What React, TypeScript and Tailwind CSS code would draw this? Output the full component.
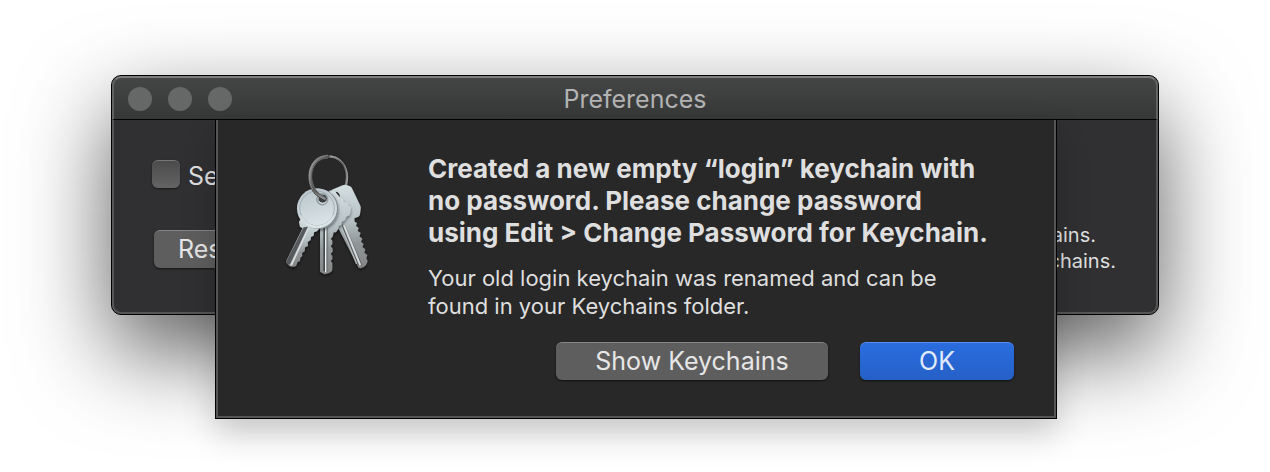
import type { ButtonHTMLAttributes } from "react"
import clsx from "clsx"

function KeysIcon() {
  return (
    <svg viewBox="0 0 360 420" className="h-[140px] w-[120px] shrink-0" aria-hidden="true">
      <defs>
        <linearGradient id="steel" x1="0" y1="0" x2="0" y2="1">
          <stop offset="0" stopColor="#d5dfe2" />
          <stop offset="0.45" stopColor="#b3bec2" />
          <stop offset="0.7" stopColor="#909698" />
          <stop offset="1" stopColor="#858585" />
        </linearGradient>
        <linearGradient id="disc" x1="0" y1="0" x2="0.3" y2="1">
          <stop offset="0" stopColor="#b6c3c9" />
          <stop offset="1" stopColor="#dae3e6" />
        </linearGradient>
        <linearGradient id="ring" x1="0" y1="0" x2="1" y2="1">
          <stop offset="0" stopColor="#a5a5a5" />
          <stop offset="0.5" stopColor="#555" />
          <stop offset="1" stopColor="#999" />
        </linearGradient>
        <filter id="drop" x="-20%" y="-20%" width="140%" height="150%">
          <feDropShadow dx="0" dy="5" stdDeviation="4" floodOpacity="0.55" />
        </filter>
      </defs>

      {/* back half of the ring */}
      <path d="M174 34c34 0 57 26 57 62 0 16-4 30-10 42" fill="none" stroke="#222" strokeWidth="12" />
      <path d="M174 34c34 0 57 26 57 62 0 16-4 30-10 42" fill="none" stroke="url(#ring)" strokeWidth="7" />
      <path d="M174 32c36 0 58 28 58 64 0 14-3 28-8 38" fill="none" stroke="#bbb" strokeWidth="1.5" />

      {/* right key */}
      <g filter="url(#drop)">
        <path
          d="M184 135 218 121q7-3 14 0l8 3q5 2 7 8l24 50q2 5 1 10l-2 16q-1 5-5 7l-12 5 1 10 7 4-3 9 8 6-3 9 9 6-4 10 9 7-4 9 8 7-4 9 9 7-3 10 9 7-3 10 4 8q-4 18-22 22-6 0-8-7l-55-108-18-17z"
          fill="url(#steel)"
        />
        <path d="m213 240 11-2 53 122-8 3-8-5z" fill="#555b5d" />
        <path d="m218 240 6-2 50 122-6 2z" fill="#d4dadb" />
        <path d="m212 240 48 116" stroke="#b5babb" strokeWidth="4" />
        <path d="M197 140q12 1 13 17l-9-4z" fill="#202324" />
      </g>

      {/* middle key */}
      <g filter="url(#drop)">
        <path
          d="m179 136 17 5 14 16 9 5 2 9 12 3 2 8 8 4-2 15-2 9-10 5-4 11-9 4-3 10-7 3-2 10-6 9h-7l-3 13-6 6 5 6v11l-5 5 6 8v9l-6 6 5 7v10l-5 4 5 8v13l-1 10q-9 9-22 10l-14-8V240z"
          fill="url(#steel)"
        />
        <path d="M160 250h9v132l-9-5z" fill="#454a4c" />
        <path d="M165 250h4v132h-4z" fill="#eef1f1" />
        <path d="M173 250v131" stroke="#727779" strokeWidth="3" />
      </g>

      {/* left key */}
      <g filter="url(#drop)">
        <path
          d="m94 220-7 11 3 14 8 5-47 93q-4 7-1 11l8 9q11 5 20 0l5-12 7-3 1-10 6-5-1-9 8-5 1-12 9-4-1-12 9-6 1-9 8-4 1-10 9-3 11-13z"
          fill="url(#steel)"
        />
        <path d="m101 247 13-2-53 110q-3 6-10 1l-2-6z" fill="#55595b" />
        <path d="m113 249 5-1-52 114-6-1z" fill="#d8dcdc" />
        <circle cx="145" cy="191" r="60" fill="#858f93" />
        <circle cx="141" cy="190" r="60" fill="url(#disc)" />
        <circle cx="141" cy="190" r="52" fill="none" stroke="#99a6ab" strokeWidth="2.5" />
        <path d="M93 211a52 52 0 0 0 96 0" fill="none" stroke="#eff4f5" strokeWidth="2" />
        <circle cx="157" cy="163" r="17" fill="#aab4b7" stroke="#737d80" strokeWidth="2" />
        <circle cx="158" cy="161" r="12" fill="#383e40" />
        <path d="M147 169q11 12 22 0" fill="none" stroke="#e8eded" strokeWidth="3" />
      </g>

      {/* front half of the ring */}
      <path d="M174 34c-32 0-54 25-54 60 0 32 17 55 44 67" fill="none" stroke="#3c3c3c" strokeWidth="11" strokeLinecap="round" />
      <path d="M174 34c-32 0-54 25-54 60 0 32 17 55 44 67" fill="none" stroke="url(#ring)" strokeWidth="7" strokeLinecap="round" />
      <path d="M174 31c-34 0-57 27-57 63 0 32 17 55 43 66" fill="none" stroke="#aaa" strokeWidth="1.5" />
      <path d="M174 39c-29 0-49 23-49 55 0 28 14 48 38 61" fill="none" stroke="#999" strokeWidth="1.5" />
    </svg>
  )
}

interface PushButtonProps extends ButtonHTMLAttributes<HTMLButtonElement> {
  primary?: boolean
}

function PushButton({ primary, className, ...props }: PushButtonProps) {
  return (
    <button
      type="button"
      className={clsx(
        "h-[38px] rounded-md border-t text-[25px] leading-none shadow-[0_1px_2px_rgba(0,0,0,0.6)]",
        primary
          ? "border-[#5b8ff0] bg-linear-to-b from-[#2a6de0] to-[#2560c6] text-[#e0eafb]"
          : "border-[#858585] bg-[#5e5e5e] text-[#e6e6e6]",
        className
      )}
      {...props}
    />
  )
}

function Alert() {
  return (
    <section
      role="alertdialog"
      aria-labelledby="alert-title"
      aria-describedby="alert-text"
      className="absolute top-0 right-[101px] left-[103px] border-x border-b border-black shadow-[0_14px_32px_rgba(0,0,0,0.2)]"
    >
      <div className="border-x-2 border-b-2 border-[#555] bg-[#282828] pt-[25px] pr-10 pb-9 pl-[52px]">
        <div className="flex gap-[38px]">
          <KeysIcon />
          <div className="min-w-0 flex-1 pt-2 text-[#dfdfdf]">
            <h2 id="alert-title" className="text-[26px] leading-8 font-bold">
              Created a new empty “login” keychain with
              <br />
              no password. Please change password
              <br />
              using Edit &gt; Change Password for Keychain.
            </h2>
            <p id="alert-text" className="mt-[15px] text-[22px] leading-7">
              Your old login keychain was renamed and can be
              <br />
              found in your Keychains folder.
            </p>
          </div>
        </div>
        <div className="mt-[22px] flex justify-end gap-8">
          <PushButton className="w-[272px]">Show Keychains</PushButton>
          <PushButton primary className="w-[154px]">
            OK
          </PushButton>
        </div>
      </div>
    </section>
  )
}

export default function App() {
  return (
    <main className="min-h-screen overflow-hidden bg-white px-[111px] pt-[75px] pb-[157px] font-['Inter',sans-serif]">
      <div className="rounded-[10px] border border-black bg-[#303032] shadow-[0_36px_90px_rgba(0,0,0,0.64)]">
        <header className="grid h-11 grid-cols-[1fr_auto_1fr] items-center rounded-t-[9px] border-x-2 border-t-2 border-b border-x-[#626262] border-t-[#7d7d7d] border-b-black bg-linear-to-b from-[#444646] to-[#363838] px-3.5">
          <div className="flex gap-4">
            <span className="size-6 rounded-full bg-[#666767]" />
            <span className="size-6 rounded-full bg-[#666767]" />
            <span className="size-6 rounded-full bg-[#666767]" />
          </div>
          <h1 className="text-[25px] leading-8 text-[#b3b3b3]">Preferences</h1>
        </header>

        <div className="relative">
          <div className="flex justify-between rounded-b-[9px] border-x-2 border-b-2 border-[#565657] px-[38px] pt-10 pb-[38px]">
            <div>
              <label className="flex h-7 items-start gap-2 text-[25px] leading-8 text-[#dfdfdf]">
                <input
                  type="checkbox"
                  className="size-7 appearance-none rounded-md border-t border-[#777] bg-linear-to-b from-[#4b4b4c] to-[#646465] shadow-[0_1px_2px_rgba(0,0,0,0.5)]"
                />
                Set
              </label>
              <PushButton className="mt-[42px] ml-0.5 px-6">Reset</PushButton>
            </div>
            <p className="mt-[62px] pr-0.5 text-right text-[20px] leading-[26px] text-[#dfdfdf]">
              <span className="block pr-5">keychains.</span>
              <span className="block">keychains.</span>
            </p>
          </div>
          <Alert />
        </div>
      </div>
    </main>
  )
}
